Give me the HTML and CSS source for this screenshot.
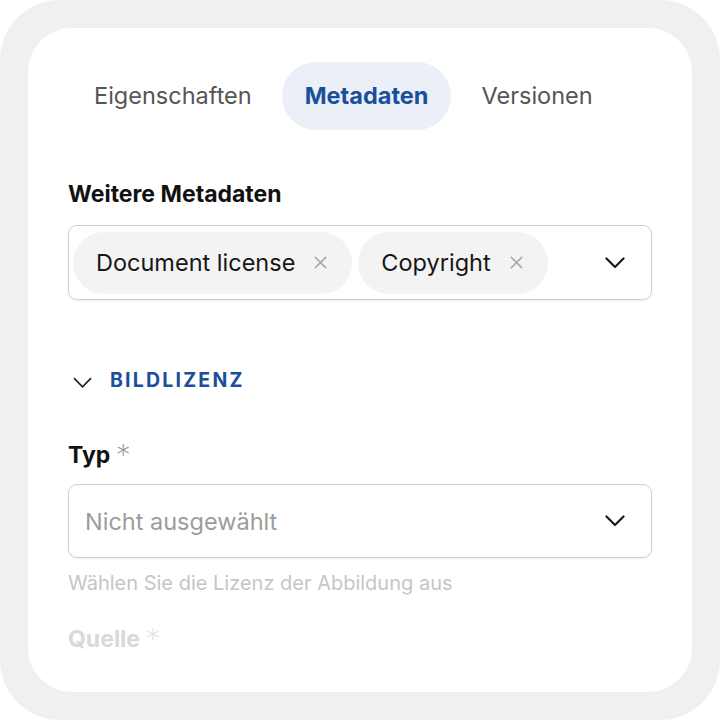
FILE: index.html
```html
<!DOCTYPE html>
<html lang="de">
<head>
<meta charset="utf-8">
<link rel="stylesheet" href="styles.css">
</head>
<body>
<div class="frame">
  <div class="card">
    <nav class="tabs">
      <span class="tab">Eigenschaften</span>
      <span class="tab active">Metadaten</span>
      <span class="tab">Versionen</span>
    </nav>

    <div class="label first">Weitere Metadaten</div>
    <div class="multi">
      <div class="chips">
        <span class="chip">Document license<svg class="x" viewBox="0 0 16 16"><path d="M2 2L14 14M14 2L2 14"/></svg></span>
        <span class="chip">Copyright<svg class="x" viewBox="0 0 16 16"><path d="M2 2L14 14M14 2L2 14"/></svg></span>
      </div>
      <svg class="chev" viewBox="0 0 20 12"><path d="M1.5 1.5L10 10L18.5 1.5"/></svg>
    </div>

    <div class="section">
      <svg class="chev-sm" viewBox="0 0 20 11"><path d="M1 1L10 10L19 1"/></svg>
      <span class="section-title">BILDLIZENZ</span>
    </div>

    <div class="label typ">Typ <span class="req">*</span></div>
    <div class="select">
      <span class="placeholder">Nicht ausgewählt</span>
      <svg class="chev" viewBox="0 0 20 12"><path d="M1.5 1.5L10 10L18.5 1.5"/></svg>
    </div>
    <div class="hint">Wählen Sie die Lizenz der Abbildung aus</div>

    <div class="label faded">Quelle <span class="req">*</span></div>
  </div>
</div>
</body>
</html>
```

FILE: styles.css
```css
* { box-sizing: border-box; }
html, body { margin: 0; padding: 0; background: #ffffff; }
body { font-family: Inter, "Noto Sans", sans-serif; }

.frame {
  width: 720px;
  height: 720px;
  background: #f0f0f0;
  border-radius: 60px;
  padding: 28px;
}
.card {
  background: #ffffff;
  border-radius: 44px;
  height: 664px;
  overflow: hidden;
  padding: 34px 40px 0 40px;
}

.tabs {
  display: flex;
  gap: 7px;
  margin-left: 3px;
}
.tab {
  height: 68px;
  line-height: 68px;
  padding: 0 23px;
  border-radius: 34px;
  font-size: 23.5px;
  color: #555555;
}
.tab.active {
  background: #ebf0f8;
  color: #1a4f9c;
  font-weight: 700;
}

.label {
  font-size: 23px;
  font-weight: 700;
  color: #111111;
  line-height: 28px;
}
.label.first { margin-top: 50px; }
.req {
  font-size: 30px;
  font-weight: 200;
  color: #9a9a9a;
  line-height: 0;
  position: relative;
  top: 3px;
}

.multi {
  margin-top: 17px;
  height: 75px;
  border: 1px solid #cfcfcf;
  border-radius: 9px;
  box-shadow: 0 1px 2px rgba(0,0,0,0.08);
  display: flex;
  align-items: center;
  padding: 0 26px 0 4px;
}
.chips { display: flex; gap: 6px; flex: 1; }
.chip {
  height: 62px;
  border-radius: 31px;
  background: #f3f3f3;
  display: flex;
  align-items: center;
  padding: 0 24px 0 23px;
  font-size: 23.5px;
  color: #161616;
}
.x {
  width: 15px;
  height: 15px;
  margin-left: 18px;
  fill: none;
  stroke: #a8a8a8;
  stroke-width: 1.6;
}
.chev {
  width: 20px;
  height: 12px;
  fill: none;
  stroke: #1a1a1a;
  stroke-width: 2.2;
  stroke-linecap: round;
  stroke-linejoin: round;
}

.section {
  margin-top: 67px;
  display: flex;
  align-items: center;
  gap: 18px;
  padding-left: 5px;
  height: 26px;
}
.chev-sm {
  width: 19px;
  height: 11px;
  fill: none;
  stroke: #222222;
  stroke-width: 1.8;
  margin-top: 4px;
}
.section-title {
  font-size: 19.5px;
  font-weight: 700;
  letter-spacing: 2.2px;
  color: #1a4f9c;
}

.label.typ { margin-top: 48px; }

.select {
  margin-top: 15px;
  height: 74px;
  border: 1px solid #cfcfcf;
  border-radius: 9px;
  box-shadow: 0 1px 2px rgba(0,0,0,0.08);
  display: flex;
  align-items: center;
  justify-content: space-between;
  padding: 0 26px 0 16px;
}
.placeholder { font-size: 23.5px; color: #9c9c9c; }

.hint {
  margin-top: 13px;
  font-size: 20px;
  color: #c6c6c6;
}

.label.faded {
  margin-top: 30px;
  color: #d9d9d9;
}
.label.faded .req { color: #e4e4e4; }
```
